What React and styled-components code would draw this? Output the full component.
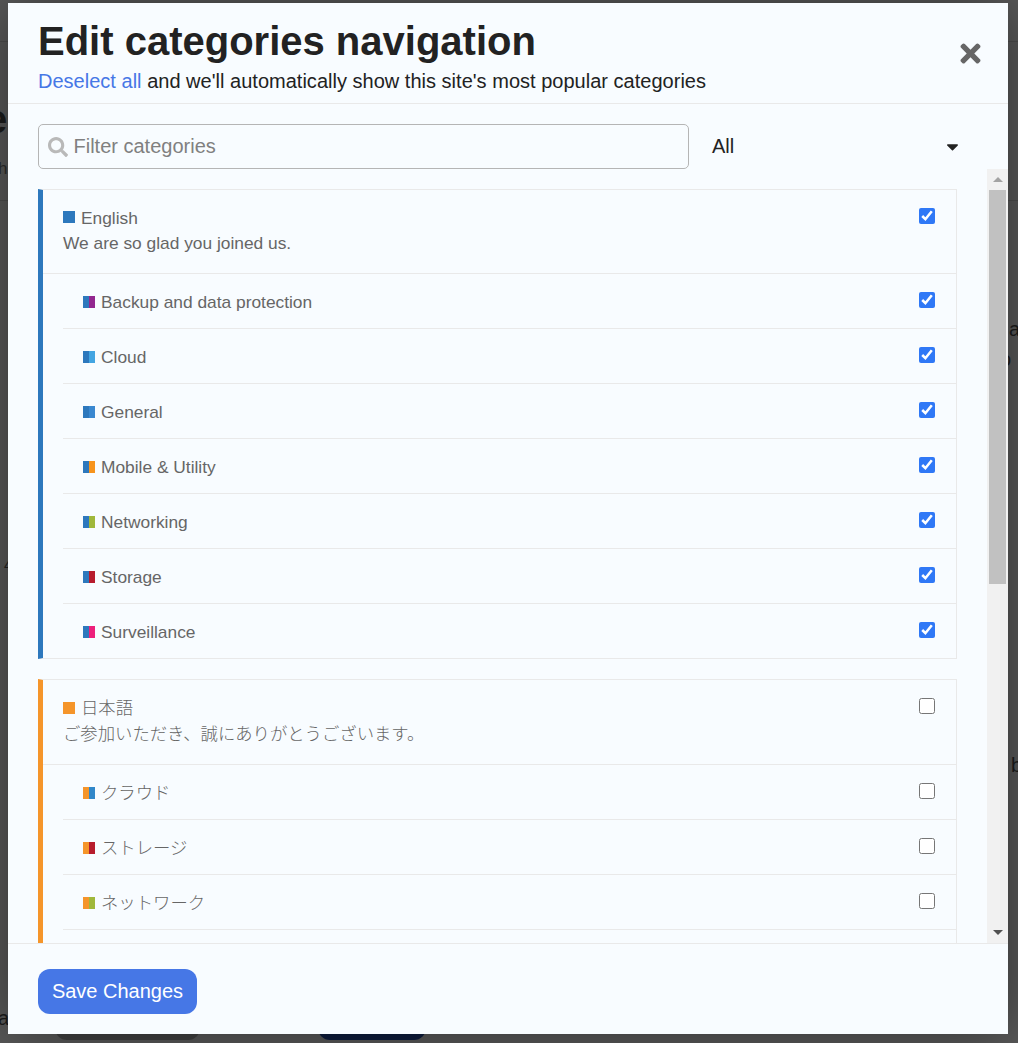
import React from "react";
import styled, { createGlobalStyle } from "styled-components";
import { FaSearch, FaTimes, FaCaretDown } from "react-icons/fa";

const Global = createGlobalStyle`
  html, body { margin: 0; padding: 0; height: 100%; overflow: hidden; }
  body { font-family: "Liberation Sans", Arial, "Noto Sans CJK JP", sans-serif; background: #5c5c5c; }
  * { box-sizing: border-box; }
`;

const Page = styled.div`
  position: relative;
  width: 1018px;
  height: 1043px;
  overflow: hidden;
  padding: 3px 10px 9px 8px;
  background: #5a5a5a;
`;

const Peek = styled.span`
  position: absolute;
  left: ${(p) => p.$x}px;
  top: ${(p) => p.$y}px;
  font-size: ${(p) => p.$size}px;
  font-weight: ${(p) => p.$weight || 400};
  line-height: 1;
  color: ${(p) => p.$color || "#1c1c1c"};
`;

const PeekLine = styled.div`
  position: absolute;
  left: 0;
  right: 0;
  top: ${(p) => p.$y}px;
  height: 1px;
  background: rgba(30, 30, 30, 0.2);
`;

const PeekPill = styled.div`
  position: absolute;
  left: ${(p) => p.$x}px;
  width: ${(p) => p.$w}px;
  top: 1010px;
  height: 30px;
  border-radius: 12px;
  background: ${(p) => p.$color};
`;

const Modal = styled.div`
  position: relative;
  display: flex;
  flex-direction: column;
  width: 1000px;
  height: 1031px;
  background: #f8fcff;
  box-shadow: 0 0 60px rgba(0, 0, 0, 0.45);
`;

const Header = styled.header`
  display: flex;
  justify-content: space-between;
  align-items: center;
  height: 101px;
  flex: none;
  padding: 3px 23px 0 30px;
  border-bottom: 1px solid #e9e9e9;
`;

const Title = styled.h1`
  margin: 0;
  font-size: 40px;
  line-height: 48px;
  font-weight: 700;
  color: #222;
`;

const Sub = styled.p`
  margin: 4px 0 0;
  font-size: 20px;
  line-height: 24px;
  letter-spacing: 0.015px;
  color: #222;
`;

const LinkText = styled.a`
  color: #4677e6;
`;

const Close = styled.button`
  display: flex;
  padding: 0;
  border: 0;
  background: none;
  color: #666;
  font-size: 29px;
  margin-top: -2px;
`;

const FilterRow = styled.div`
  display: flex;
  align-items: center;
  flex: none;
  padding: 20px 46px 0 30px;
`;

const SearchBox = styled.div`
  display: flex;
  align-items: center;
  gap: 5.5px;
  width: 651px;
  height: 45px;
  padding: 0 9px;
  border: 1px solid #b5b5b5;
  border-radius: 5px;
  color: #b9b9b9;
  font-size: 20px;
`;

const SearchInput = styled.input`
  flex: 1;
  min-width: 0;
  border: 0;
  outline: 0;
  padding: 0;
  background: none;
  font: inherit;
  color: #222;
  &::placeholder {
    color: #808080;
    opacity: 1;
  }
`;

const FilterSelect = styled.button`
  display: flex;
  flex: 1;
  align-items: center;
  justify-content: space-between;
  margin-left: 23px;
  padding: 0;
  border: 0;
  background: none;
  font: inherit;
  font-size: 20px;
  color: #222;
`;

const Body = styled.div`
  display: flex;
  flex: 1;
  min-height: 0;
`;

const List = styled.div`
  flex: 1;
  min-width: 0;
  overflow: hidden;
  padding: 20px 30px 0;
`;

const Card = styled.section`
  margin-bottom: 20px;
  border: 1px solid #e9e9e9;
  border-left: 5px solid ${(p) => p.$color};
`;

const CardHead = styled.div`
  display: flex;
  justify-content: space-between;
  height: ${(p) => (p.$cjk ? 85 : 84)}px;
  padding: 17px 21px 0 20px;
  border-bottom: 1px solid #e9e9e9;
`;

const Name = styled.div`
  display: flex;
  align-items: center;
  gap: 6px;
  height: 22px;
  font-size: 17.35px;
  color: #666;
  font-weight: ${(p) => (p.$cjk ? 300 : 400)};
`;

const HeadName = styled(Name)`
  margin-top: ${(p) => (p.$cjk ? -1 : 0)}px;
  padding-bottom: ${(p) => (p.$cjk ? 1 : 0)}px;
`;

const RowName = styled(Name)`
  padding-top: ${(p) => (p.$cjk ? 0 : 2)}px;
  padding-bottom: ${(p) => (p.$cjk ? 2 : 0)}px;
`;

const Desc = styled.div`
  margin-top: ${(p) => (p.$cjk ? 5 : 3)}px;
  font-size: 17.35px;
  line-height: 22px;
  color: #666;
  font-weight: ${(p) => (p.$cjk ? 300 : 400)};
`;

const Swatch = styled.span`
  flex: none;
  width: 12px;
  height: 12px;
  margin-top: ${(p) => p.$shift || 0}px;
  background: linear-gradient(90deg, ${(p) => p.$a} 50%, ${(p) => p.$b || p.$a} 50%);
`;

const Row = styled.div`
  display: flex;
  justify-content: space-between;
  align-items: center;
  height: 55px;
  margin-left: 20px;
  padding: 0 21px 0 20px;
  border-bottom: 1px solid #e9e9e9;
  &:last-child {
    border-bottom: 0;
    height: 54px;
  }
`;

const Check = styled.input.attrs({ type: "checkbox", readOnly: true })`
  flex: none;
  width: 16px;
  height: 16px;
  margin: ${(p) => (p.$head ? "1px 0 0" : "-2px 0 0")};
  accent-color: #2f78f6;
`;

const Rail = styled.div`
  display: flex;
  flex-direction: column;
  align-items: center;
  flex: none;
  width: 21px;
  height: 100%;
  background: #f1f1f1;
`;

const RailButton = styled.div`
  display: flex;
  align-items: center;
  justify-content: center;
  flex: none;
  height: 21px;
`;

const Arrow = styled.span`
  width: 0;
  height: 0;
  border-left: 5px solid transparent;
  border-right: 5px solid transparent;
  ${(p) =>
    p.$up
      ? "border-bottom: 5px solid #a3a3a3;"
      : "border-top: 5px solid #505050;"}
`;

const Thumb = styled.div`
  flex: none;
  width: 17px;
  height: 394px;
  background: #c1c1c1;
`;

const RailGap = styled.div`
  flex: 1;
`;

const Footer = styled.footer`
  flex: none;
  height: 91px;
  padding: 25px 30px 0;
  border-top: 1px solid #e9e9e9;
`;

const Save = styled.button`
  width: 159px;
  height: 45px;
  padding: 0;
  border: 0;
  border-radius: 12px;
  background: #4677e6;
  color: #fff;
  font: inherit;
  font-size: 20px;
`;

const groups = [
  {
    color: "#2d78bd",
    name: "English",
    desc: "We are so glad you joined us.",
    checked: true,
    cjk: false,
    rows: [
      ["Backup and data protection", "#92278f"],
      ["Cloud", "#43a5e2"],
      ["General", "#3a88d0"],
      ["Mobile & Utility", "#f7941d"],
      ["Networking", "#a0b83b"],
      ["Storage", "#b71c2d"],
      ["Surveillance", "#ed207b"],
    ],
  },
  {
    color: "#f5952a",
    name: "日本語",
    desc: "ご参加いただき、誠にありがとうございます。",
    checked: false,
    cjk: true,
    rows: [
      ["クラウド", "#3087c9"],
      ["ストレージ", "#b71c2d"],
      ["ネットワーク", "#a0b83b"],
      ["モバイル", "#f7941d"],
    ],
  },
];

export default function App() {
  return (
    <Page>
      <Global />
      <PeekLine $y={41} />
      <PeekLine $y={200} />
      <Peek $x={-15} $y={99} $size={40} $weight={700}>e</Peek>
      <Peek $x={-2} $y={160} $size={17} $color="#2c2c2c">h</Peek>
      <Peek $x={4} $y={558} $size={14} $color="#222">4</Peek>
      <Peek $x={-2} $y={1008} $size={20}>a</Peek>
      <Peek $x={1009} $y={319} $size={20}>a</Peek>
      <Peek $x={1000} $y={349} $size={20}>o</Peek>
      <Peek $x={1011} $y={755} $size={20}>b</Peek>
      <PeekPill $x={55} $w={145} $color="#414141" />
      <PeekPill $x={318} $w={108} $color="#0e1d3f" />
      <Modal>
        <Header>
          <div>
            <Title>Edit categories navigation</Title>
            <Sub>
              <LinkText>Deselect all</LinkText> and we'll automatically show this site's most popular categories
            </Sub>
          </div>
          <Close aria-label="Close"><FaTimes /></Close>
        </Header>
        <FilterRow>
          <SearchBox>
            <FaSearch />
            <SearchInput placeholder="Filter categories" />
          </SearchBox>
          <FilterSelect>
            All
            <FaCaretDown size={19} />
          </FilterSelect>
        </FilterRow>
        <Body>
          <List>
            {groups.map((g) => (
              <Card key={g.name} $color={g.color}>
                <CardHead $cjk={g.cjk}>
                  <div>
                    <HeadName $cjk={g.cjk}>
                      <Swatch $a={g.color} $shift={g.cjk ? 2 : -2} />
                      {g.name}
                    </HeadName>
                    <Desc $cjk={g.cjk}>{g.desc}</Desc>
                  </div>
                  <Check $head checked={g.checked} />
                </CardHead>
                {g.rows.map(([label, c]) => (
                  <Row key={label}>
                    <RowName $cjk={g.cjk}>
                      <Swatch $a={g.color} $b={c} $shift={g.cjk ? 4 : 0} />
                      {label}
                    </RowName>
                    <Check checked={g.checked} />
                  </Row>
                ))}
              </Card>
            ))}
          </List>
          <Rail>
            <RailButton><Arrow $up /></RailButton>
            <Thumb />
            <RailGap />
            <RailButton><Arrow /></RailButton>
          </Rail>
        </Body>
        <Footer>
          <Save>Save Changes</Save>
        </Footer>
      </Modal>
    </Page>
  );
}
